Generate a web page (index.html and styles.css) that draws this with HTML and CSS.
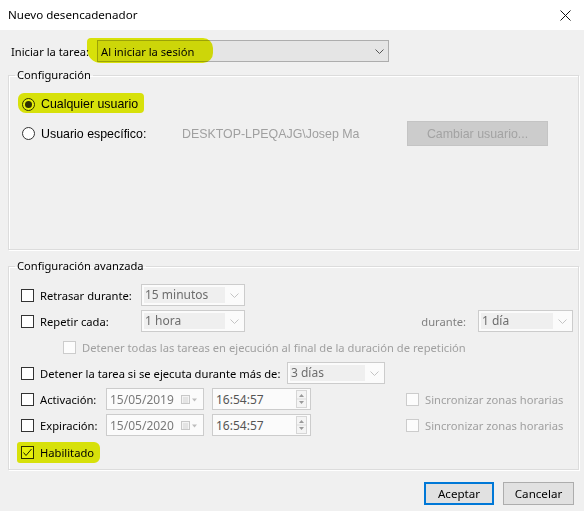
FILE: index.html
```html
<!DOCTYPE html>
<html lang="es">
<head>
<meta charset="utf-8">
<title>Nuevo desencadenador</title>
<link rel="stylesheet" href="styles.css">
</head>
<body>
<div class="window">
  <div class="titlebar">
    <span class="title">Nuevo desencadenador</span>
    <svg class="close" width="11" height="11" viewBox="0 0 11 11"><path d="M0.5 0.5L10.5 10.5M10.5 0.5L0.5 10.5" stroke="#111" stroke-width="1"/></svg>
  </div>
  <div class="content">
    <div class="start-row">
      <span class="lbl">Iniciar la tarea:</span>
      <div class="combo-main">
        <span class="combo-text">Al iniciar la sesión</span>
        <svg class="chev" width="9" height="5" viewBox="0 0 9 5"><path d="M0.5 0.5L4.5 4.5L8.5 0.5" fill="none" stroke="#555" stroke-width="1"/></svg>
      </div>
      <span class="hl hl-start"></span>
    </div>

    <fieldset class="group g1">
      <legend>Configuración</legend>
      <div class="rrow r1">
        <span class="radio on"><span class="dot"></span></span>
        <span class="ms">Cualquier usuario</span>
        <span class="hl hl-any"></span>
      </div>
      <div class="rrow r2">
        <div class="rlabel">
          <span class="radio"></span>
          <span class="ms">Usuario específico:</span>
        </div>
        <span class="ms user">DESKTOP-LPEQAJG\Josep Ma</span>
        <span class="ms btn-dis">Cambiar usuario...</span>
      </div>
    </fieldset>

    <fieldset class="group g2">
      <legend>Configuración avanzada</legend>
      <div class="arow first">
        <div class="cb w-delay"><span class="chk"></span><span>Retrasar durante:</span></div>
        <div class="dcombo w-104"><span class="dtext">15 minutos</span><svg class="dchev" width="9" height="5" viewBox="0 0 9 5"><path d="M0.5 0.5L4.5 4.5L8.5 0.5" fill="none" stroke="#c4c4c4" stroke-width="1"/></svg></div>
      </div>
      <div class="arow">
        <div class="cb w-delay"><span class="chk"></span><span>Repetir cada:</span></div>
        <div class="dcombo w-104"><span class="dtext">1 hora</span><svg class="dchev" width="9" height="5" viewBox="0 0 9 5"><path d="M0.5 0.5L4.5 4.5L8.5 0.5" fill="none" stroke="#c4c4c4" stroke-width="1"/></svg></div>
        <div class="dur-group">
          <span class="dis-mid">durante:</span>
          <div class="dcombo w-95"><span class="dtext">1 día</span><svg class="dchev" width="9" height="5" viewBox="0 0 9 5"><path d="M0.5 0.5L4.5 4.5L8.5 0.5" fill="none" stroke="#c4c4c4" stroke-width="1"/></svg></div>
        </div>
      </div>
      <div class="arow sub">
        <div class="cb"><span class="chk dis"></span><span class="dis">Detener todas las tareas en ejecución al final de la duración de repetición</span></div>
      </div>
      <div class="arow">
        <div class="cb w-stop"><span class="chk"></span><span>Detener la tarea si se ejecuta durante más de:</span></div>
        <div class="dcombo w-98"><span class="dtext">3 días</span><svg class="dchev" width="9" height="5" viewBox="0 0 9 5"><path d="M0.5 0.5L4.5 4.5L8.5 0.5" fill="none" stroke="#c4c4c4" stroke-width="1"/></svg></div>
      </div>
      <div class="arow">
        <div class="cb w-date"><span class="chk"></span><span>Activación:</span></div>
        <div class="dbox w-98">
          <span class="dval">15/05/2019</span>
          <svg class="cal" width="16" height="9" viewBox="0 0 16 9"><rect x="0.5" y="0.5" width="8" height="8" fill="#f4f4f4" stroke="#c8c8c8"/><path d="M2 3h5M2 5h5M2 7h5" stroke="#d4d4d4"/><path d="M11 3.5h5l-2.5 3z" fill="#bdbdbd"/></svg>
        </div>
        <div class="dbox w-99 time">
          <span class="tval">16:54:57</span>
          <span class="spin"><svg width="9" height="16" viewBox="0 0 9 16"><path d="M4.5 3L2 6h5z" fill="#9a9a9a"/><path d="M0 8h9" stroke="#dcdcdc"/><path d="M4.5 13L2 10h5z" fill="#9a9a9a"/></svg></span>
        </div>
        <div class="cb sync"><span class="chk dis"></span><span class="dis">Sincronizar zonas horarias</span></div>
      </div>
      <div class="arow">
        <div class="cb w-date"><span class="chk"></span><span>Expiración:</span></div>
        <div class="dbox w-98">
          <span class="dval">15/05/2020</span>
          <svg class="cal" width="16" height="9" viewBox="0 0 16 9"><rect x="0.5" y="0.5" width="8" height="8" fill="#f4f4f4" stroke="#c8c8c8"/><path d="M2 3h5M2 5h5M2 7h5" stroke="#d4d4d4"/><path d="M11 3.5h5l-2.5 3z" fill="#bdbdbd"/></svg>
        </div>
        <div class="dbox w-99 time">
          <span class="tval">16:54:57</span>
          <span class="spin"><svg width="9" height="16" viewBox="0 0 9 16"><path d="M4.5 3L2 6h5z" fill="#9a9a9a"/><path d="M0 8h9" stroke="#dcdcdc"/><path d="M4.5 13L2 10h5z" fill="#9a9a9a"/></svg></span>
        </div>
        <div class="cb sync"><span class="chk dis"></span><span class="dis">Sincronizar zonas horarias</span></div>
      </div>
      <div class="arow enabled">
        <div class="cb"><span class="chk"><svg width="11" height="11" viewBox="0 0 11 11"><path d="M1.5 5.5L4 8.5L9.5 2" fill="none" stroke="#222" stroke-width="1"/></svg></span><span>Habilitado</span></div>
        <span class="hl hl-en"></span>
      </div>
    </fieldset>

    <div class="buttons">
      <span class="btn default">Aceptar</span>
      <span class="btn">Cancelar</span>
    </div>
  </div>
</div>
</body>
</html>
```

FILE: styles.css
```css
* { box-sizing: border-box; }
html, body { margin: 0; padding: 0; }
body {
  width: 584px;
  height: 511px;
  overflow: hidden;
  background: #f0f0f0;
  font-family: "Noto Sans", "Open Sans", sans-serif;
  font-size: 11.2px;
  color: #000;
}
.window { width: 584px; height: 511px; display: flex; flex-direction: column; }

.titlebar {
  height: 30px;
  flex: none;
  background: #fff;
  display: flex;
  align-items: center;
  justify-content: space-between;
  padding: 0 13px 0 8px;
}
.title { font-size: 11.6px; line-height: 16px; }

.content { flex: 1; display: flex; flex-direction: column; padding: 10px 5px 0 8px; }

.start-row { position: relative; display: flex; align-items: center; height: 22px; flex: none; }
.start-row .lbl { width: 89px; padding-left: 3px; }
.combo-main {
  width: 292px;
  height: 22px;
  border: 1px solid #adadad;
  background: #e5e5e5;
  display: flex;
  align-items: center;
  justify-content: space-between;
  padding: 0 4px 0 3px;
}

.hl {
  position: absolute;
  background: rgb(229, 239, 10);
  mix-blend-mode: multiply;
  pointer-events: none;
}
.hl-start { left: 79px; top: -2px; width: 126px; height: 25px; border-radius: 4px 10px 10px 14px; }
.hl-any { left: 9px; top: -1px; width: 126px; height: 20px; border-radius: 6px 4px 4px 8px; }
.hl-en { left: 8px; top: 1px; width: 83px; height: 21px; border-radius: 3px 6px 6px 3px; }

fieldset.group {
  margin: 0;
  padding: 0;
  border: 1px solid #dcdcdc;
  min-width: 0;
  width: 571px;
  flex: none;
  box-shadow: 1px 1px 0 #fff, inset 1px 1px 0 #fff;
}
fieldset.group legend { margin-left: 6px; padding: 0 2px; font-size: 11.2px; line-height: 16px; }
fieldset.g1 { margin-top: 5px; height: 183px; }
fieldset.g2 { margin-top: 8px; height: 212px; }

.ms { font-family: "Liberation Sans", Arial, sans-serif; font-size: 12.4px; }

.rrow { position: relative; display: flex; align-items: center; }
.r1 { margin-top: 11px; height: 20px; padding-left: 13px; gap: 6px; }
.r2 { margin-top: 7px; height: 25px; padding-left: 13px; }
.rlabel { display: flex; align-items: center; gap: 6px; width: 160px; }
.radio {
  width: 13px; height: 13px;
  border: 1px solid #333;
  border-radius: 50%;
  background: #fff;
  display: flex; align-items: center; justify-content: center;
  flex: none;
}
.radio .dot { width: 7px; height: 7px; border-radius: 50%; background: #333; }
.user { width: 225px; color: #a0a0a0; }
.btn-dis {
  width: 141px; height: 25px;
  background: #cccccc;
  border: 1px solid #c4c4c4;
  color: #a3a3a3;
  display: flex; align-items: center; justify-content: center;
}

.arow { position: relative; display: flex; align-items: center; height: 22px; margin-top: 4px; padding-left: 12px; padding-right: 5px; }
.arow.first { margin-top: 10px; }
.arow.sub { padding-left: 54px; }
.cb { display: flex; align-items: center; gap: 6px; flex: none; white-space: nowrap; }
.w-delay { width: 120px; }
.w-stop { width: 266px; }
.w-date { width: 85px; }
.chk {
  width: 13px; height: 13px;
  border: 1px solid #333;
  background: #fff;
  flex: none;
  display: flex;
}
.chk.dis { border-color: #cccccc; background: #fcfcfc; }
.dis { color: #a0a0a0; }
.dis-mid { color: #808080; margin-right: 12px; }

.dcombo {
  height: 22px;
  border: 1px solid #cccccc;
  background: #fbfbfb;
  display: flex;
  align-items: center;
  padding: 2px 5px 2px 2px;
  gap: 5px;
  flex: none;
}
.dtext { flex: 1; height: 16px; line-height: 16px; background: #efefef; color: #6d6d6d; padding-left: 1px; font-size: 12px; }
.w-104 { width: 104px; }
.w-95 { width: 95px; }
.w-98 { width: 98px; }
.w-99 { width: 99px; }
.dur-group { margin-left: auto; display: flex; align-items: center; }

.dbox {
  height: 22px;
  border: 1px solid #cccccc;
  background: #fbfbfb;
  display: flex;
  align-items: center;
  padding: 0 6px 0 3px;
  flex: none;
}
.dval { flex: 1; color: #7a7a7a; font-size: 12px; }
.time { margin-left: 8px; padding-right: 3px; }
.tval { flex: 1; color: #555; font-size: 12px; }
.spin { width: 11px; height: 18px; border: 1px solid #d6d6d6; background: #f4f4f4; display: flex; }
.sync { margin-left: 95px; }

.arow.enabled { margin-top: 5px; }

.buttons { display: flex; justify-content: flex-end; gap: 9px; margin-top: 12px; padding-right: 5px; }
.btn {
  width: 71px; height: 23px;
  border: 1px solid #adadad;
  background: #e1e1e1;
  display: flex; align-items: center; justify-content: center;
  font-size: 11.6px;
}
.btn.default { width: 70px; border: 2px solid #0078d7; }
```
